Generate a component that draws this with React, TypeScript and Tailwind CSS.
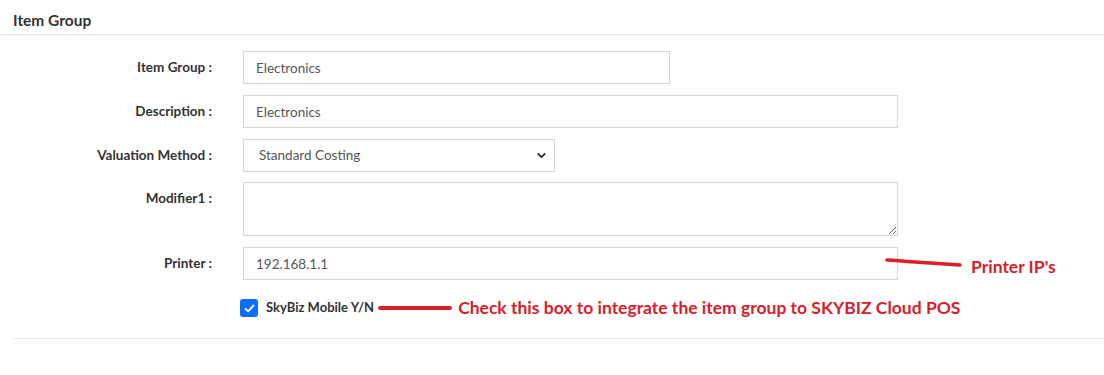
import React from 'react';
import { ChevronDown } from 'lucide-react';

const labelCls = 'h-[33px] flex items-center justify-end text-[13.5px] font-bold text-[#333]';
const inputCls = 'block h-[33px] border border-[#d6d6d6] bg-white px-[12px] text-[13.5px] text-[#555] outline-none';

const Field: React.FC<{ label: string; children: React.ReactNode }> = ({ label, children }) => (
  <>
    <div className={labelCls}>{label}</div>
    <div className="h-[33px]">{children}</div>
  </>
);

export default function App() {
  return (
    <div className="w-[1104px] h-[375px] bg-white font-['Lato',sans-serif]">
      {/* header */}
      <div className="h-[35px] border-b border-[#e8e5d6] pl-[13px] pt-[9px]">
        <h1 className="text-[15.5px] font-bold leading-[22px] text-[#333]">Item Group</h1>
      </div>

      <div className="ml-[14px] border-b border-[#e9e9e9] pt-[16px] pb-[21px]">
        <div className="grid grid-cols-[198px_1fr] gap-x-[31px]">
          <Field label="Item Group :">
            <input className={`${inputCls} w-[427px]`} defaultValue="Electronics" />
          </Field>
          <div className="col-span-2 h-[11px]" />
          <Field label="Description :">
            <input className={`${inputCls} w-[655px]`} defaultValue="Electronics" />
          </Field>
          <div className="col-span-2 h-[11px]" />
          <Field label="Valuation Method :">
            <div className="relative w-[312px]">
              <select className={`${inputCls} w-full appearance-none pl-[15px]`} defaultValue="standard">
                <option value="standard">Standard Costing</option>
                <option value="average">Weighted Average</option>
                <option value="fifo">FIFO</option>
              </select>
              <ChevronDown className="pointer-events-none absolute right-[7px] top-[10px] h-[13px] w-[13px] text-[#333]" strokeWidth={3.5} />
            </div>
          </Field>
          <div className="col-span-2 h-[10px]" />
          <div className={labelCls}>Modifier1 :</div>
          <div>
            <textarea className="block h-[54px] w-[655px] border border-[#d6d6d6] px-[12px] py-[6px] text-[13.5px] text-[#555] outline-none" />
          </div>
          <div className="col-span-2 h-[11px]" />
          <Field label="Printer :">
            <div className="flex h-[33px] items-center">
              <input className={`${inputCls} w-[655px] shrink-0`} defaultValue="192.168.1.1" />
              <svg className="-ml-[13px] mt-[-1px] shrink-0" width="78" height="12" viewBox="0 0 78 12">
                <path d="M2 3 C10 3 14 4 30 5 S60 7 75 8" stroke="#dc1f26" strokeWidth="3.5" fill="none" strokeLinecap="round" />
              </svg>
              <span className="ml-[8px] mt-[6px] whitespace-nowrap text-[17.5px] font-bold leading-[20px] text-[#d8202a]">Printer IP's</span>
            </div>
          </Field>
        </div>

        <div className="mt-[19px] flex h-[18px] items-center pl-[226px]">
          <span className="flex h-[18px] w-[18px] items-center justify-center rounded-[3px] bg-[#0d6efd]">
            <svg width="13" height="13" viewBox="0 0 20 20">
              <path d="M4 10.5l4 4 8-9" stroke="#fff" strokeWidth="3" fill="none" strokeLinecap="round" strokeLinejoin="round" />
            </svg>
          </span>
          <span className="ml-[8px] text-[13px] font-bold text-[#333]">SkyBiz Mobile Y/N</span>
          <svg className="ml-[4px]" width="74" height="8" viewBox="0 0 74 8">
            <path d="M2 4 L72 4" stroke="#dc1f26" strokeWidth="4" strokeLinecap="round" />
          </svg>
          <span className="ml-[6px] whitespace-nowrap text-[17.5px] font-bold leading-[20px] text-[#d8202a]">
            Check this box to integrate the item group to SKYBIZ Cloud POS
          </span>
        </div>
      </div>
    </div>
  );
}
